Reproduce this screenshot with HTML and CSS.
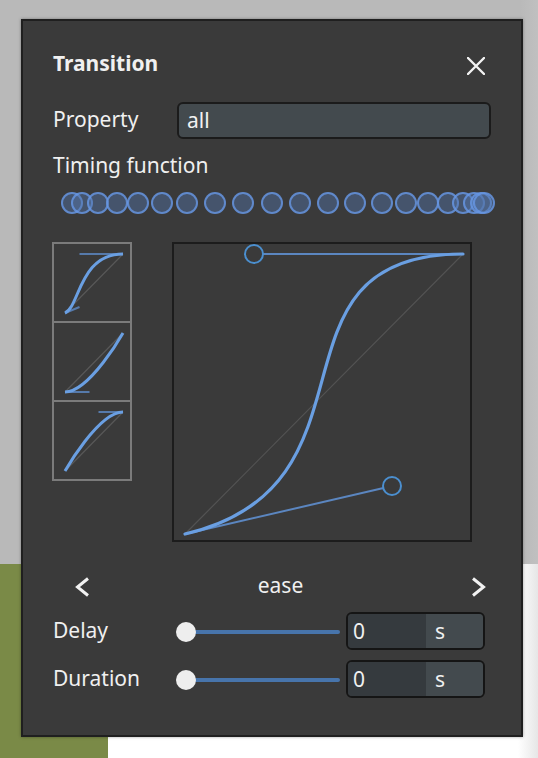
FILE: index.html
```html
<!DOCTYPE html>
<html>
<head>
<meta charset="utf-8">
<link rel="stylesheet" href="styles.css">
</head>
<body>
<div class="backdrop">
  <div class="bg-top"></div>
  <div class="bg-bottom">
    <div class="bg-green"></div>
    <div class="bg-white"></div>
  </div>
</div>

<div class="panel">
  <div class="header">
    <div class="title">Transition</div>
    <svg class="close" width="18" height="18" viewBox="0 0 18 18"><path d="M1 1 L17 17 M17 1 L1 17" stroke="#f2f2f2" stroke-width="2.4" stroke-linecap="round"/></svg>
  </div>

  <div class="prop-row">
    <div class="label">Property</div>
    <div class="text-input">all</div>
  </div>

  <div class="label timing-label">Timing function</div>

  <div class="dots">
    <span class="dot" style="left:8px"></span>
    <span class="dot" style="left:18px"></span>
    <span class="dot" style="left:34px"></span>
    <span class="dot" style="left:53px"></span>
    <span class="dot" style="left:74px"></span>
    <span class="dot" style="left:98px"></span>
    <span class="dot" style="left:123px"></span>
    <span class="dot" style="left:151px"></span>
    <span class="dot" style="left:179px"></span>
    <span class="dot" style="left:208px"></span>
    <span class="dot" style="left:236px"></span>
    <span class="dot" style="left:264px"></span>
    <span class="dot" style="left:291px"></span>
    <span class="dot" style="left:318px"></span>
    <span class="dot" style="left:342px"></span>
    <span class="dot" style="left:364px"></span>
    <span class="dot" style="left:384px"></span>
    <span class="dot" style="left:399px"></span>
    <span class="dot" style="left:410px"></span>
    <span class="dot" style="left:417px"></span>
    <span class="dot" style="left:420px"></span>
  </div>

  <div class="editor">
    <div class="thumbs">
      <div class="thumb">
        <svg width="76" height="77" viewBox="0 0 76 77">
          <line x1="11" y1="69" x2="69" y2="10" class="t-diag"/>
          <line x1="11" y1="69" x2="25.5" y2="63" class="t-handle"/>
          <line x1="69" y1="10" x2="25.5" y2="10" class="t-handle"/>
          <path d="M11 69 C25.5 63 25.5 10 69 10" class="t-curve"/>
        </svg>
      </div>
      <div class="thumb">
        <svg width="76" height="77" viewBox="0 0 76 77">
          <line x1="11" y1="69" x2="69" y2="10" class="t-diag"/>
          <line x1="11" y1="69" x2="35.5" y2="69" class="t-handle"/>
          <path d="M11 69 C35.5 69 69 10 69 10" class="t-curve"/>
        </svg>
      </div>
      <div class="thumb">
        <svg width="76" height="77" viewBox="0 0 76 77">
          <line x1="11" y1="69" x2="69" y2="10" class="t-diag"/>
          <line x1="69" y1="10" x2="44.5" y2="10" class="t-handle"/>
          <path d="M11 69 C11 69 44.5 10 69 10" class="t-curve"/>
        </svg>
      </div>
    </div>
    <div class="graph">
      <svg width="296" height="296" viewBox="0 0 296 296">
        <line x1="11" y1="290" x2="289" y2="10" class="g-diag"/>
        <line x1="11" y1="290" x2="209.5" y2="244" class="g-handle"/>
        <line x1="89" y1="10" x2="289" y2="10" class="g-handle"/>
        <path d="M11 290 C218 242 80 10 289 10" class="g-curve"/>
        <circle cx="218" cy="242" r="9" class="g-knob"/>
        <circle cx="80" cy="10" r="9" class="g-knob"/>
      </svg>
    </div>
  </div>

  <div class="nav">
    <svg class="chev" width="15" height="20" viewBox="0 0 15 20"><polyline points="13,1.5 2.5,10 13,18.5" fill="none" stroke="#f2f2f2" stroke-width="3" stroke-linejoin="miter"/></svg>
    <div class="nav-name">ease</div>
    <svg class="chev" width="15" height="20" viewBox="0 0 15 20"><polyline points="2,1.5 12.5,10 2,18.5" fill="none" stroke="#f2f2f2" stroke-width="3" stroke-linejoin="miter"/></svg>
  </div>

  <div class="slider-row">
    <div class="label">Delay</div>
    <div class="slider"><span class="track"></span><span class="knob"></span></div>
    <div class="num-input"><span class="num">0</span><span class="unit">s</span></div>
  </div>

  <div class="slider-row second">
    <div class="label">Duration</div>
    <div class="slider"><span class="track"></span><span class="knob"></span></div>
    <div class="num-input"><span class="num">0</span><span class="unit">s</span></div>
  </div>
</div>
</body>
</html>
```

FILE: styles.css
```css
* { box-sizing: border-box; }

html, body {
  margin: 0;
  padding: 0;
  width: 538px;
  height: 758px;
  overflow: hidden;
}

body {
  font-family: "Noto Sans", "Open Sans", sans-serif;
  color: #f0f0f0;
  position: relative;
}

.backdrop {
  display: flex;
  flex-direction: column;
  width: 538px;
  height: 758px;
}

.bg-top {
  height: 564px;
  background: linear-gradient(to right, #b9b9b9 0, #b9b9b9 520px, #c0c0c0 538px);
}

.bg-bottom {
  flex: 1;
  display: flex;
}

.bg-green {
  width: 108px;
  background: #7a8a47;
}

.bg-white {
  flex: 1;
  background: linear-gradient(to right, #ffffff 0, #ffffff 410px, #e6e6e6 430px);
}

.panel {
  position: absolute;
  left: 21px;
  top: 19px;
  width: 502px;
  height: 718px;
  background: #3a3a3a;
  border: 2px solid #1f1f1f;
  box-shadow: 0 0 3px rgba(0, 0, 0, 0.35);
  padding: 0 30px;
  display: flex;
  flex-direction: column;
}

.header {
  margin-top: 28px;
  height: 28px;
  display: flex;
  justify-content: space-between;
  align-items: flex-start;
}

.title {
  font-weight: 700;
  font-size: 21px;
  line-height: 28px;
}

.close {
  margin-top: 8px;
  margin-right: 6px;
}

.label {
  font-size: 21px;
  line-height: 28px;
  color: #f0f0f0;
}

.prop-row {
  margin-top: 25px;
  height: 37px;
  display: flex;
  align-items: center;
}

.prop-row .label {
  width: 124px;
  margin-top: -3px;
}

.text-input {
  flex: 1;
  height: 37px;
  background: #434a4e;
  border: 2px solid #1b1b1b;
  border-radius: 6px;
  padding-left: 8px;
  font-size: 21px;
  line-height: 33px;
  color: #f2f2f2;
}

.timing-label {
  margin-top: 12px;
  height: 28px;
}

.dots {
  position: relative;
  margin-top: 12px;
  height: 24px;
}

.dot {
  position: absolute;
  top: 1px;
  width: 22px;
  height: 22px;
  border-radius: 50%;
  border: 2px solid rgba(105, 155, 235, 0.75);
  background: rgba(85, 118, 170, 0.45);
}

.editor {
  margin-top: 27px;
  height: 300px;
  display: flex;
  gap: 40px;
}

.thumbs {
  margin-left: -1px;
  width: 80px;
  display: flex;
  flex-direction: column;
}

.thumb {
  width: 80px;
  height: 81px;
  border: 2px solid #7b7b7b;
}

.thumb + .thumb {
  margin-top: -2px;
}

.thumb svg { display: block; }

.t-diag { stroke: #585858; stroke-width: 1.2; }
.t-handle { stroke: #5c86c0; stroke-width: 2; stroke-opacity: 0.85; }
.t-curve { fill: none; stroke: #6a9fe2; stroke-width: 3; }

.graph {
  width: 300px;
  height: 300px;
  border: 2px solid #1c1c1c;
}

.graph svg { display: block; }

.g-diag { stroke: #535353; stroke-width: 1.2; }
.g-handle { stroke: #5b86c0; stroke-width: 2; }
.g-curve { fill: none; stroke: #6a9fe2; stroke-width: 3.2; stroke-linecap: round; }
.g-knob { fill: none; stroke: #4b8fcf; stroke-width: 2; }

.nav {
  margin-top: 29px;
  height: 28px;
  display: flex;
  align-items: center;
  padding-left: 22px;
  padding-right: 5px;
}

.chev { margin-top: 4px; }

.nav-name {
  flex: 1;
  text-align: center;
  font-size: 21px;
  line-height: 28px;
}

.slider-row {
  margin-top: 13px;
  height: 38px;
  display: flex;
  align-items: center;
}

.slider-row.second { margin-top: 10px; }

.slider-row .label {
  width: 123px;
  margin-top: -3px;
}

.slider {
  position: relative;
  width: 166px;
  height: 20px;
  margin-right: 4px;
  margin-top: 2px;
}

.track {
  position: absolute;
  left: 10px;
  top: 8px;
  width: 154px;
  height: 4px;
  border-radius: 2px;
  background: #4774ab;
}

.knob {
  position: absolute;
  left: 0;
  top: 0;
  width: 20px;
  height: 20px;
  border-radius: 50%;
  background: #eeeeee;
}

.num-input {
  width: 139px;
  height: 38px;
  border: 2px solid #151515;
  border-radius: 6px;
  display: flex;
  overflow: hidden;
  font-size: 21px;
  line-height: 34px;
}

.num {
  width: 78px;
  background: #353a3e;
  padding-left: 5px;
}

.unit {
  flex: 1;
  background: #434a4e;
  padding-left: 9px;
}
```
